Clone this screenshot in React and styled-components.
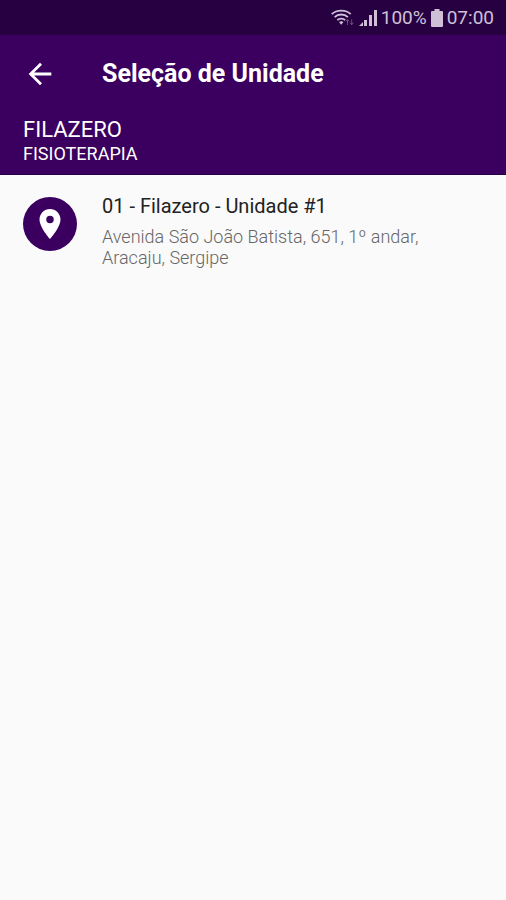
import styled, { createGlobalStyle } from "styled-components";
// Icons
import { MdArrowBack, MdLocationOn } from "react-icons/md";

const units = [
    {
        id: 1,
        name: "01 - Filazero - Unidade #1",
        address: ["Avenida São João Batista, 651, 1º andar,", "Aracaju, Sergipe"],
    },
];

const WifiIcon = () => (
    <svg width="24" height="18" viewBox="0 0 24 18" fill="none" aria-hidden="true">
        <g stroke="currentColor" strokeWidth="1.8">
            <path d="M.8 5.2C5.5.4 15 .4 19.700 5.200" />
            <path d="M3.6 8.200c3.600-3.600 9.700-3.600 13.300 0" />
            <path d="M6.3 11.200c2.200-2.200 5.700-2.200 7.900 0" />
        </g>
        <path d="M10.2 15.800l-2.200-2.700c1.300-1.100 3.200-1.100 4.400 0z" fill="currentColor" />
        <path
            d="M16.5 16v-5M14.700 12.500l1.800-1.900 1.800 1.900M20.700 10.500v5M18.900 13.700l1.800 1.900 1.800-1.900"
            stroke="currentColor"
            opacity=".4"
        />
    </svg>
);

const SignalIcon = () => (
    <svg width="18" height="18" viewBox="0 0 18 18" fill="currentColor" aria-hidden="true">
        <path d="M0 17l4-4v4zM5 11h3v6H5zM10 6h3v11h-3zM15 1h3v16h-3z" />
    </svg>
);

const BatteryIcon = () => (
    <svg width="12" height="18" viewBox="0 0 12 18" fill="currentColor" aria-hidden="true">
        <path d="M3.5 0h5v2H11q1 0 1 1v14q0 1-1 1H1q-1 0-1-1V3q0-1 1-1h2.500z" />
    </svg>
);

const App = () => {
    return (
        <>
            <GlobalStyle />
            <StatusBar>
                <WifiIcon />
                <SignalIcon />
                <span>100%</span>
                <BatteryIcon />
                <span>07:00</span>
            </StatusBar>
            <Header>
                <Toolbar>
                    <BackButton type="button" aria-label="Voltar">
                        <MdArrowBack size="34px" />
                    </BackButton>
                    <Title>Seleção de Unidade</Title>
                </Toolbar>
                <Company>FILAZERO</Company>
                <Service>FISIOTERAPIA</Service>
            </Header>
            <UnitList>
                {units.map((unit) => (
                    <Unit key={unit.id}>
                        <UnitIcon>
                            <MdLocationOn size="36px" />
                        </UnitIcon>
                        <div>
                            <UnitName>{unit.name}</UnitName>
                            {unit.address.map((line) => (
                                <Address key={line}>{line}</Address>
                            ))}
                        </div>
                    </Unit>
                ))}
            </UnitList>
        </>
    );
};

export default App;

const GlobalStyle = createGlobalStyle`
    * {
        box-sizing: border-box;
    }
    body {
        margin: 0;
        background: #fafafa;
        font-family: Roboto, sans-serif;
    }
`;

const StatusBar = styled.div`
    display: flex;
    align-items: center;
    justify-content: flex-end;
    gap: 4px;
    height: 35px;
    padding: 0 12px;
    background: #270042;
    color: #cfc0d8;
    font-size: 19px;
`;

const Header = styled.header`
    padding: 0 23px 9px;
    border-bottom: 1px solid #24004a;
    background: #3b005f;
    color: #ffffff;
`;

const Toolbar = styled.div`
    display: flex;
    align-items: center;
    height: 78px;
    margin-bottom: 4px;
    gap: 45px;
`;

const BackButton = styled.button`
    display: flex;
    padding: 0;
    border: 0;
    background: none;
    color: inherit;
    cursor: pointer;
`;

const Title = styled.h1`
    margin: 0;
    font-size: 25px;
    font-weight: 700;
    line-height: 30px;
`;

const Company = styled.div`
    font-size: 22px;
    line-height: 26px;
`;

const Service = styled.div`
    font-size: 18px;
    line-height: 22px;
`;

const UnitList = styled.ul`
    margin: 0;
    padding: 0;
    list-style: none;
`;

const Unit = styled.li`
    display: flex;
    gap: 25px;
    padding: 18px 23px;
`;

const UnitIcon = styled.div`
    display: flex;
    flex-shrink: 0;
    align-items: center;
    justify-content: center;
    width: 54px;
    height: 54px;
    margin-top: 4px;
    border-radius: 50%;
    background: #3b005f;
    color: #ffffff;
`;

const UnitName = styled.h2`
    margin: 0 0 6px;
    color: #222222;
    font-size: 20px;
    font-weight: 400;
    line-height: 27px;
`;

const Address = styled.div`
    color: #666666;
    font-size: 18px;
    font-weight: 300;
    line-height: 21px;
`;
